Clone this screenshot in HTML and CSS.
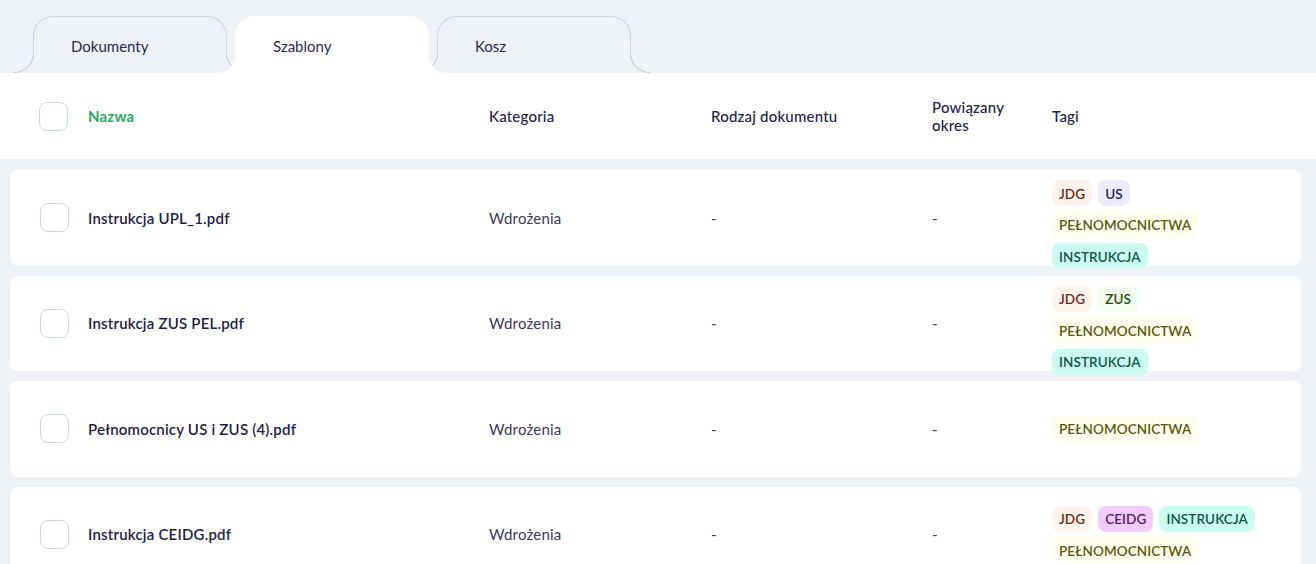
FILE: index.html
```html
<!DOCTYPE html>
<html lang="pl">
<head>
<meta charset="utf-8">
<title>Szablony</title>
<link rel="stylesheet" href="styles.css">
</head>
<body>
<div class="page">
  <nav class="tabs">
    <div class="tab">Dokumenty</div>
    <div class="tab tab-active">Szablony</div>
    <div class="tab">Kosz</div>
  </nav>

  <div class="table-head">
    <span class="checkbox"></span>
    <span class="cell cell-name th th-sorted">Nazwa</span>
    <span class="cell cell-cat th">Kategoria</span>
    <span class="cell cell-type th">Rodzaj dokumentu</span>
    <span class="cell cell-period th th-wrap">Powiązany okres</span>
    <span class="cell cell-tags th">Tagi</span>
  </div>

  <div class="rows">
    <div class="row">
      <span class="checkbox"></span>
      <span class="cell cell-name name">Instrukcja UPL_1.pdf</span>
      <span class="cell cell-cat">Wdrożenia</span>
      <span class="cell cell-type">-</span>
      <span class="cell cell-period">-</span>
      <div class="cell cell-tags tags">
        <span class="tag tag-jdg">JDG</span>
        <span class="tag tag-us">US</span>
        <span class="tag tag-pel">PEŁNOMOCNICTWA</span>
        <span class="tag tag-ins">INSTRUKCJA</span>
      </div>
    </div>

    <div class="row">
      <span class="checkbox"></span>
      <span class="cell cell-name name">Instrukcja ZUS PEL.pdf</span>
      <span class="cell cell-cat">Wdrożenia</span>
      <span class="cell cell-type">-</span>
      <span class="cell cell-period">-</span>
      <div class="cell cell-tags tags">
        <span class="tag tag-jdg">JDG</span>
        <span class="tag tag-zus">ZUS</span>
        <span class="tag tag-pel">PEŁNOMOCNICTWA</span>
        <span class="tag tag-ins">INSTRUKCJA</span>
      </div>
    </div>

    <div class="row">
      <span class="checkbox"></span>
      <span class="cell cell-name name">Pełnomocnicy US i ZUS (4).pdf</span>
      <span class="cell cell-cat">Wdrożenia</span>
      <span class="cell cell-type">-</span>
      <span class="cell cell-period">-</span>
      <div class="cell cell-tags tags">
        <span class="tag tag-pel">PEŁNOMOCNICTWA</span>
      </div>
    </div>

    <div class="row">
      <span class="checkbox"></span>
      <span class="cell cell-name name">Instrukcja CEIDG.pdf</span>
      <span class="cell cell-cat">Wdrożenia</span>
      <span class="cell cell-type">-</span>
      <span class="cell cell-period">-</span>
      <div class="cell cell-tags tags">
        <span class="tag tag-jdg">JDG</span>
        <span class="tag tag-ceidg">CEIDG</span>
        <span class="tag tag-ins">INSTRUKCJA</span>
        <span class="tag tag-pel">PEŁNOMOCNICTWA</span>
      </div>
    </div>
  </div>
</div>
</body>
</html>
```

FILE: styles.css
```css
* { box-sizing: border-box; }

html, body {
  margin: 0;
  padding: 0;
  height: 100%;
  overflow: hidden;
}

body {
  background: #eff2f7;
  font-family: "Lato", "Noto Sans", sans-serif;
  font-size: 15px;
  color: #1f1d47;
}

.page {
  width: 1316px;
}

/* ---------- tabs ---------- */
.tabs {
  display: flex;
  gap: 8px;
  padding: 16px 0 0 33px;
  height: 73px;
}

.tab {
  position: relative;
  width: 194px;
  height: 57px;
  padding: 1px 0 0 37px;
  display: flex;
  align-items: center;
  border: 1px solid #c7d5e6;
  border-bottom: 0;
  border-radius: 20px 20px 0 0;
  background: #eff2f7;
  color: #2b2951;
  z-index: 1;
}

.tab::before,
.tab::after {
  content: "";
  position: absolute;
  bottom: 0;
  width: 20px;
  height: 20px;
}

.tab::before {
  left: -20px;
  background: radial-gradient(circle at 0 0, transparent 19px, #c7d5e6 19px, #c7d5e6 20px, #eff2f7 20.5px);
}

.tab::after {
  right: -20px;
  background: radial-gradient(circle at 100% 0, transparent 19px, #c7d5e6 19px, #c7d5e6 20px, #eff2f7 20.5px);
}

.tab-active {
  background: #ffffff;
  border-color: #ffffff;
  z-index: 2;
}

.tab-active::before {
  background: radial-gradient(circle at 0 0, transparent 19.5px, #ffffff 20.5px);
}

.tab-active::after {
  background: radial-gradient(circle at 100% 0, transparent 19.5px, #ffffff 20.5px);
}

/* ---------- shared columns ---------- */
.checkbox {
  flex: none;
  width: 29px;
  height: 29px;
  margin-right: 19px;
  border: 1px solid #c9d6e7;
  border-radius: 8px;
  background: #fff;
}

.cell { flex: none; }
.cell-name { width: 401px; }
.cell-cat { width: 222px; }
.cell-type { width: 221px; }
.cell-period { width: 120px; }
.cell-tags { width: 212px; }

/* ---------- header ---------- */
.table-head {
  position: relative;
  z-index: 3;
  display: flex;
  align-items: center;
  height: 86px;
  padding-left: 40px;
  background: #ffffff;
}

.table-head .checkbox {
  margin-left: -1px;
  margin-right: 20px;
}

.th {
  font-weight: 500;
  color: #24224c;
  letter-spacing: 0.2px;
}

.th-sorted {
  color: #2fa862;
  font-weight: 700;
}

.th-wrap {
  padding-right: 30px;
  line-height: 18px;
}

/* ---------- rows ---------- */
.rows {
  display: flex;
  flex-direction: column;
  gap: 10px;
  padding: 11px 15px 0 10px;
}

.row {
  display: flex;
  align-items: safe center;
  height: 95.5px;
  padding: 10px 0 10px 30px;
  background: #ffffff;
  border-radius: 8px;
  color: #3b3a5c;
  letter-spacing: 0.2px;
}

.name {
  font-weight: 600;
  color: #1f1d47;
}

/* ---------- tags ---------- */
.tags {
  display: flex;
  flex-wrap: wrap;
  align-content: flex-start;
  gap: 5.5px 6px;
}

.tag {
  display: inline-flex;
  align-items: center;
  height: 26px;
  padding: 1px 7px 0;
  border-radius: 8px;
  font-size: 13.5px;
  font-weight: 600;
  letter-spacing: 0.1px;
  white-space: nowrap;
}

.tag-jdg { background: #fff3ed; color: #6a2b16; }
.tag-us { background: #eeebfe; color: #292068; }
.tag-zus { background: #f2fdee; color: #1d4d10; }
.tag-pel { background: #fefdee; color: #5a570f; }
.tag-ins { background: #ccfbf1; color: #0c574a; }
.tag-ceidg { background: #f2cdfb; color: #59156b; }
```
